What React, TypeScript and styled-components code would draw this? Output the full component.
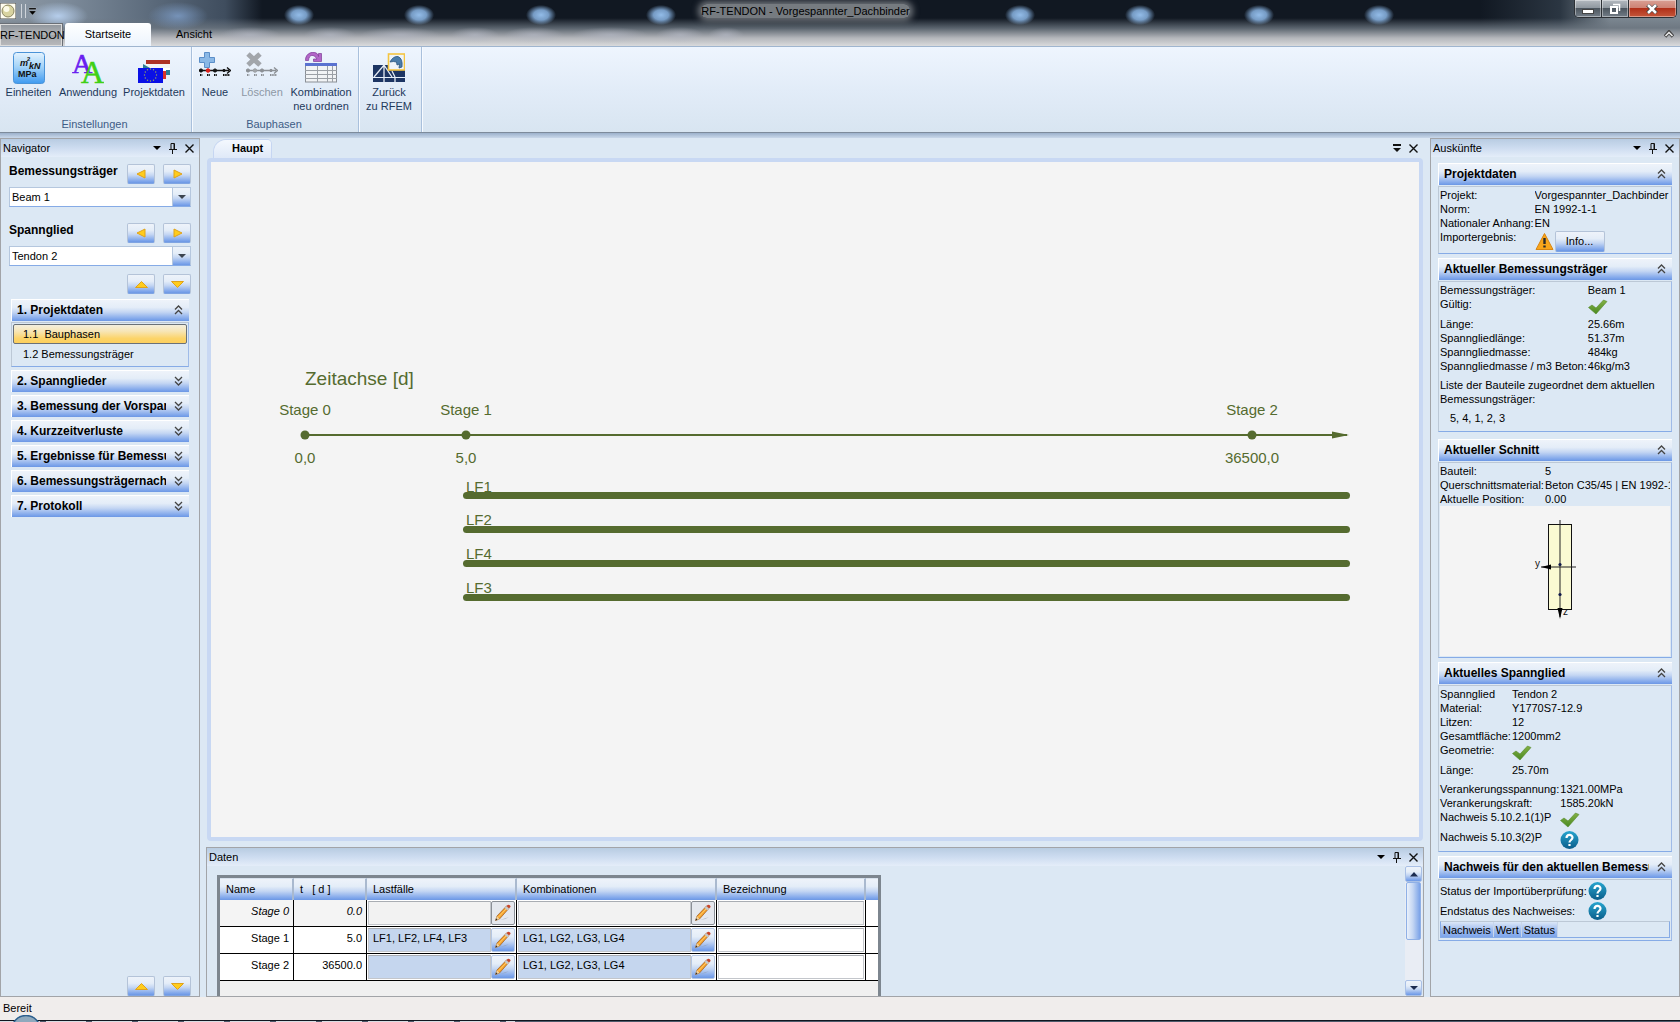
import React from "react";
import styled, { createGlobalStyle, css } from "styled-components";

const GlobalStyle = createGlobalStyle`
  *, *::before, *::after { box-sizing: border-box; }
  html, body, #root { height: 100%; }
  body {
    margin: 0;
    background: #dce8f4;
    color: #000;
    font-family: "Liberation Sans", Arial, sans-serif;
    font-size: 11px;
    line-height: 14px;
  }
  button, select, input { font: inherit; color: inherit; }
  h1, h2, p, dl, dd, ul { margin: 0; padding: 0; }
  ul { list-style: none; }
`;

const glossy = "linear-gradient(#eef3fa 0%, #e4edf8 35%, #c4d6f3 58%, #7ba3ea 92%, #6c97e4 100%)";

/* ---------- frame ---------- */

const Window = styled.div`
  display: flex;
  flex-direction: column;
  height: 100vh;
  overflow: hidden;
`;

const glowSpots = [299, 419, 541, 661, 1020, 1140, 1259, 1379]
  .map((x) => `radial-gradient(ellipse 15px 10px at ${x}px 15px, #93bce8 0%, #86b0dedd 50%, #86b0de00 100%)`)
  .join(",");

const smears = [
  [250, 30],
  [330, 26],
  [400, 40],
  [475, 24],
  [534, 30],
  [610, 38],
  [680, 24],
  [726, 18],
]
  .map(([x, r]) => `radial-gradient(ellipse ${r}px 8px at ${x}px 35px, #b4b8c4aa 0%, #b4b8c400 100%)`)
  .join(",");

const TitleArea = styled.header`
  flex: none;
  height: 46px;
  display: flex;
  flex-direction: column;
  background:
    ${glowSpots},
    ${smears},
    radial-gradient(ellipse 30px 14px at 58px 16px, #b5cdeb 0%, #b5cdeb00 100%),
    radial-gradient(ellipse 30px 14px at 178px 16px, #7f9fcacc 0%, #7f9fca00 100%),
    linear-gradient(#6b757f00 18px, #6b757fcc 28px, #b4b6bb 38px, #d9dadc 46px),
    linear-gradient(90deg, #8d98a3 0, #7f8d9c 60px, #5c6b7c 150px, #3f4d5e 225px, #111822 262px, #111822 1480px, #2b3642 1560px, #7c8791 1610px, #7c8791 100%);
`;

const CaptionBar = styled.div`
  height: 23px;
  display: flex;
  justify-content: space-between;
  align-items: flex-start;
`;

const QuickAccess = styled.div`
  display: flex;
  align-items: center;
  height: 22px;
  gap: 5px;
`;

const Caption = styled.h1`
  margin-top: 4px;
  border-radius: 6px;
  background: #868a8fdd;
  box-shadow: 0 0 6px 3px #868a8fcc;
  font-size: 11px;
  font-weight: normal;
  line-height: 14px;
  white-space: nowrap;
`;

const IconButton = styled.button`
  display: grid;
  place-items: center;
  padding: 0;
  border: 0;
  background: none;
`;

const WindowButtons = styled.div`
  display: flex;
  height: 18px;
  margin-right: 3px;
  border: 1px solid #2c3035;
  border-top: 0;
  border-radius: 0 0 5px 5px;
  overflow: hidden;
`;

const WindowButton = styled(IconButton)<{ $close?: boolean }>`
  width: ${(p) => (p.$close ? 47 : 27)}px;
  border-right: ${(p) => (p.$close ? "0" : "1px solid #2c3035")};
  box-shadow: inset 0 0 0 1px #ffffff66;
  background: ${(p) =>
    p.$close
      ? "linear-gradient(#d9a094 0%, #cd8172 48%, #b13019 50%, #c5573a 100%)"
      : "linear-gradient(#b4bac0 0%, #8e969e 48%, #4d565f 50%, #737d87 100%)"};
`;

const RibbonTabs = styled.nav`
  display: flex;
  align-items: flex-end;
  height: 23px;
  gap: 3px;
`;

const AppMenu = styled.button`
  width: 62px;
  height: 22px;
  padding: 0;
  border: 0;
  background: linear-gradient(#8e949b, #b4b6b9 50%, #a2a5a9 52%, #b9babd);
  box-shadow: inset 0 0 0 1px #dcdcdc, 0 0 0 1px #6a6f76;
  white-space: nowrap;
`;

const RibbonTab = styled.button<{ $active?: boolean }>`
  width: ${(p) => (p.$active ? 86 : 80)}px;
  height: 23px;
  padding: 0 0 1px;
  border: 0;
  border-radius: 3px 3px 0 0;
  background: ${(p) => (p.$active ? "linear-gradient(#fff, #ecf4fd)" : "none")};
`;

const CollapseRibbon = styled(IconButton)`
  margin: 0 6px 8px auto;
`;

/* ---------- ribbon ---------- */

const Ribbon = styled.div`
  flex: none;
  display: flex;
  height: 87px;
  border-top: 1px solid #9fb5cf;
  border-bottom: 1px solid #7d8b9b;
  background: linear-gradient(#eef5fe, #e2ecf8 50%, #d8e5f1);
`;

const RibbonGroup = styled.section`
  display: flex;
  flex-direction: column;
  justify-content: space-between;
  padding: 5px 2px 0 0;
  border-right: 1px solid #a9c0dc;
  box-shadow: 1px 0 0 #f6faff;
  color: #1e395b;
`;

const RibbonItems = styled.div`
  display: flex;
  align-items: flex-start;
`;

const RibbonItem = styled.button<{ $width: number }>`
  width: ${(p) => p.$width}px;
  padding: 0;
  border: 0;
  background: none;
  display: flex;
  flex-direction: column;
  align-items: center;
  line-height: 14px;
  white-space: pre-line;
  color: #1e395b;
  gap: 1px;
  &:disabled { color: #8d98a5; }
`;

const RibbonCaption = styled.p`
  text-align: center;
  line-height: 15px;
  color: #3e5c86;
  min-height: 15px;
`;

const RibbonShade = styled.div`
  flex: none;
  height: 5px;
  background: linear-gradient(#9cb1cb, #c9d8ea);
`;

/* ---------- docked panels ---------- */

const Workspace = styled.main`
  flex: 1;
  min-height: 0;
  display: grid;
  grid-template-columns: 200px minmax(0, 1fr) 250px;
  gap: 6px;
`;

const Dock = styled.section`
  display: flex;
  flex-direction: column;
  min-height: 0;
  border: 1px solid #a2a4a8;
  background: #dce8f4;
`;

const DockHeader = styled.div`
  flex: none;
  display: flex;
  align-items: center;
  height: 18px;
  padding: 0 5px 0 2px;
  gap: 8px;
  background: linear-gradient(#b8cce2, #cddcf0 50%, #e4edf9);
`;

const DockTitle = styled.h2`
  flex: 1;
  font-size: 11px;
  font-weight: normal;
`;

const GlossButton = styled.button`
  display: grid;
  place-items: center;
  width: 28px;
  height: 20px;
  padding: 0;
  border: 1px solid #b4c3d8;
  border-bottom-color: #7fa4e2;
  border-radius: 2px;
  background: ${glossy};
`;

const NavBody = styled.div`
  flex: 1;
  min-height: 0;
  display: flex;
  flex-direction: column;
  padding: 7px 8px 0;
`;

const Picker = styled.div`
  display: grid;
  grid-template-columns: 1fr auto auto;
  column-gap: 8px;
  row-gap: 3px;
  margin-bottom: 16px;
`;

const PickerLabel = styled.label`
  font-size: 12px;
  font-weight: bold;
  line-height: 15px;
`;

const SelectBox = styled.div`
  grid-column: 1 / -1;
  display: grid;
  grid-template-columns: 1fr 18px;
  height: 20px;
  border: 1px solid #b5c7de;
  border-bottom-color: #86abe6;
  background: #fff;
`;

const SelectField = styled.select`
  grid-area: 1 / 1 / 2 / 3;
  width: 100%;
  padding: 0 20px 0 2px;
  border: 0;
  appearance: none;
  background: none;
`;

const SelectArrow = styled.span`
  grid-area: 1 / 2;
  display: grid;
  place-items: center;
  border-left: 1px solid #b5c7de;
  background: ${glossy};
  pointer-events: none;
`;

const ButtonPair = styled.div`
  display: flex;
  justify-content: flex-end;
  gap: 8px;
`;

const PickerSpacing = styled.div`
  margin-top: -8px;
`;

const NavList = styled.div`
  flex: 1;
  display: flex;
  flex-direction: column;
  gap: 3px;
  padding: 5px 2px 0;
`;

const SectionHead = styled.button`
  display: flex;
  align-items: center;
  width: 100%;
  height: 22px;
  padding: 0 6px 2px 5px;
  border: 0;
  border-top: 1px solid #fff;
  border-left: 1px solid #fff;
  background: ${glossy};
  font-size: 12px;
  font-weight: bold;
  text-align: left;
`;

const SectionName = styled.span`
  flex: 1;
  min-width: 0;
  margin-right: 8px;
  overflow: hidden;
  white-space: nowrap;
`;

const boxed = css`
  border: 1px solid #bcc8d6;
  border-bottom-color: #86abe6;
  border-right-color: #9fbbe8;
`;

const NavItems = styled.ul`
  ${boxed}
  margin-top: 1px;
  padding: 1px;
  height: 45px;
`;

const NavItem = styled.button<{ $active?: boolean }>`
  display: block;
  width: 100%;
  height: 20px;
  padding: 0 9px;
  border: 1px solid ${(p) => (p.$active ? "#6a7178" : "transparent")};
  border-radius: 2px;
  background: ${(p) =>
    p.$active ? "linear-gradient(#f3efdf, #f7e5b5 35%, #fcd469 75%, #fccf5e)" : "none"};
  text-align: left;
  white-space: pre;
`;

/* ---------- document and data ---------- */

const Center = styled.div`
  display: flex;
  flex-direction: column;
  min-height: 0;
  min-width: 0;
`;

const DocTabs = styled.div`
  flex: none;
  display: flex;
  align-items: center;
  height: 20px;
  padding: 0 6px 0 8px;
  gap: 8px;
`;

const DocTab = styled.button`
  height: 18px;
  margin: 2px auto 0 0;
  padding: 0 8px 2px 18px;
  border: 0;
  border-radius: 12px 4px 0 0;
  background: linear-gradient(#f4f8fe, #dfe9f8);
  box-shadow: 0 0 0 1px #c6d6f2;
  font-weight: bold;
`;

const DocFrame = styled.div`
  flex: 1;
  min-height: 0;
  display: flex;
  margin: 0 1px 6px;
  border: 4px solid #c8d8f3;
  border-radius: 4px;
  background: #f4f4f4;
`;

const Chart = styled.svg`
  flex: 1;
  min-width: 0;
  height: 100%;
  font-family: "Liberation Sans", Arial, sans-serif;
  font-size: 15px;
  fill: #556b2f;
`;

const DataDock = styled(Dock)`
  flex: none;
  height: 150px;
`;

const DataBody = styled.div`
  flex: 1;
  min-height: 0;
  display: flex;
  justify-content: space-between;
  overflow: hidden;
`;

const TableFrame = styled.div`
  margin: 9px 0 0 10px;
  border: 3px solid #7d868f;
  border-bottom: 0;
  background: #f0f0f0;
`;

const DataTable = styled.table`
  table-layout: fixed;
  width: 656px;
  border-collapse: separate;
  border-spacing: 0;
  background: #fff;
`;

const HeadCell = styled.th<{ $width: number }>`
  width: ${(p) => p.$width}px;
  height: 22px;
  padding: 0 6px 2px;
  border-right: 2px solid #a9b9cf;
  border-top: 1px solid #d8e2ee;
  background: ${glossy};
  font-weight: normal;
  text-align: left;
  white-space: pre;
  &:last-child { border-right: 0; }
`;

const Cell = styled.td<{ $muted?: boolean; $text?: boolean }>`
  height: 27px;
  padding: ${(p) => (p.$text ? "0 4px 4px" : "1px")};
  border-right: 1px solid #000;
  border-bottom: 1px solid #000;
  background: ${(p) => (p.$muted ? "#f4f4f4" : "#fff")};
  font-style: ${(p) => (p.$muted ? "italic" : "normal")};
  text-align: right;
  &:last-child { border-right: 0; background: #fff; }
`;

const CellEditor = styled.div`
  display: flex;
  height: 24px;
`;

const CellInput = styled.input<{ $tone: string }>`
  flex: 1;
  min-width: 0;
  width: 100%;
  height: 24px;
  padding: 0 4px 4px;
  border: 1px solid #c3c6cb;
  border-top-color: #a9adb3;
  background: ${(p) => p.$tone};
`;

const EditButton = styled.button<{ $muted?: boolean }>`
  display: grid;
  place-items: center;
  flex: none;
  width: 24px;
  height: 24px;
  padding: 0;
  border: 1px solid ${(p) => (p.$muted ? "#8a8f96" : "#b4c6e2")};
  border-radius: 2px;
  background: ${(p) => (p.$muted ? "#e5e8ee" : glossy)};
`;

const ScrollTrack = styled.div`
  display: flex;
  flex-direction: column;
  width: 17px;
  margin-right: 1px;
  background: #e9edf4;
`;

const ScrollButton = styled(IconButton)`
  height: 16px;
  border: 1px solid #a9c0e6;
  border-radius: 2px;
  background: ${glossy};
`;

const ScrollThumb = styled.div`
  height: 58px;
  margin: 0 1px auto;
  border: 1px solid #8fb0e6;
  border-radius: 2px;
  background: linear-gradient(90deg, #eaf1fb, #c4d6f3 45%, #7aa2e8);
`;

/* ---------- info panel ---------- */

const InfoBody = styled.div`
  flex: 1;
  min-height: 0;
  padding: 6px 7px 0;
  overflow: hidden;
`;

const InfoSection = styled.section<{ $wideGap?: boolean }>`
  margin-bottom: ${(p) => (p.$wideGap ? 7 : 4)}px;
`;

const InfoBox = styled.div`
  ${boxed}
  margin-top: 1px;
  padding: 1px;
`;

const Facts = styled.dl<{ $label: number; $gap?: boolean }>`
  display: grid;
  grid-template-columns: minmax(${(p) => p.$label}px, max-content) minmax(0, 1fr);
  margin-top: ${(p) => (p.$gap ? 5 : 0)}px;
  white-space: nowrap;
`;

const Term = styled.dt<{ $middle?: boolean }>`
  align-self: ${(p) => (p.$middle ? "center" : "start")};
  padding-right: 1px;
`;

const Value = styled.dd<{ $icon?: boolean }>`
  display: flex;
  align-items: center;
  height: ${(p) => (p.$icon ? 20 : 14)}px;
  overflow: hidden;
`;

const ImportValue = styled.dd`
  display: flex;
  align-items: center;
  gap: 1px;
  height: 22px;
`;

const InfoButton = styled(GlossButton)`
  width: 50px;
  height: 21px;
`;

const Note = styled.p<{ $indent?: boolean }>`
  margin-top: 5px;
  padding: ${(p) => (p.$indent ? "0 0 5px 10px" : "0")};
`;

const SectionDrawing = styled.div`
  height: 150px;
  background: #f4f4f4;
`;

const CheckFrame = styled.div`
  border: 1px solid #86abe6;
  border-top-color: #bcc8d6;
  margin-bottom: 1px;
`;

const CheckTable = styled.table`
  border-collapse: collapse;
`;

const CheckHead = styled.th`
  height: 15px;
  padding: 0 2px;
  border-right: 1px solid #c8d6ea;
  background: linear-gradient(#dbe7f7, #a3bff0 50%, #7ca4ea);
  font-weight: normal;
`;

const StatusBar = styled.footer`
  flex: none;
  height: 23px;
  padding: 0 3px;
  background: #f0edec;
  line-height: 22px;
`;

const TaskbarEdge = styled.div`
  flex: none;
  height: 2px;
  border-top: 1px solid #10161f;
  background:
    linear-gradient(90deg, #4e5a6b00 515px, #4e5a6b 515px),
    repeating-linear-gradient(90deg, #d8dce2 0 40px, #4e5a6b 40px 46px);
`;

const StartOrb = styled.svg`
  position: absolute;
  left: 12px;
  bottom: 0;
`;

/* ---------- small glyphs ---------- */

const ChevronPair = ({ up = false }: { up?: boolean }) => (
  <svg width="9" height="10" viewBox="0 0 9 10" fill="none" stroke="#444" strokeWidth="1.3">
    {up ? <path d="M1 4.5 4.5 1 8 4.5M1 9 4.5 5.5 8 9" /> : <path d="M1 1 4.5 4.5 8 1M1 5.5 4.5 9 8 5.5" />}
  </svg>
);

const arrows = {
  left: "M10 1v8L2 5z",
  right: "M3 1v8l8-4z",
  up: "M.5 8.500 6.500 2.500l6 6z",
  down: "M.5 2.500h12l-6 6z",
};

const GoldArrow = ({ to }: { to: keyof typeof arrows }) => (
  <svg width="13" height="10" viewBox="0 0 13 10">
    <path d={arrows[to]} fill="#ffcc1c" stroke="#e0a21a" strokeWidth="1" strokeLinejoin="round" />
  </svg>
);

const DownGlyph = ({ tone = "#000" }: { tone?: string }) => (
  <svg width="8" height="5" viewBox="0 0 8 5">
    <path d="M0 0h8L4 4z" fill={tone} />
  </svg>
);

const MenuGlyph = () => (
  <svg width="8" height="9" viewBox="0 0 8 9">
    <path d="M0 0h8v2H0zM0 4h8L4 8z" fill="#111" />
  </svg>
);

const PinGlyph = () => (
  <svg width="8" height="11" viewBox="0 0 8 11" fill="none" stroke="#111">
    <path d="M2 6.500V.5h3.500v6M5 1v5M0 6.500h8M3.500 7v4" />
  </svg>
);

const CloseGlyph = () => (
  <svg width="9" height="9" viewBox="0 0 9 9" stroke="#111" strokeWidth="1.400">
    <path d="M.5.5l8 8M8.500.5l-8 8" />
  </svg>
);

const DockControls = () => (
  <>
    <IconButton aria-label="Menü"><DownGlyph /></IconButton>
    <IconButton aria-label="Anheften"><PinGlyph /></IconButton>
    <IconButton aria-label="Schließen"><CloseGlyph /></IconButton>
  </>
);

const CheckMark = () => (
  <svg width="20" height="18" viewBox="0 0 20 18">
    <defs>
      <linearGradient id="tick" x1="0" y1="0" x2="0" y2="1">
        <stop offset="0" stopColor="#84b045" />
        <stop offset="1" stopColor="#4a8a22" />
      </linearGradient>
    </defs>
    <path d="M.5 9.500 4 7l4 3L15.500 2 19 3.500 8 16z" fill="url(#tick)" stroke="#558a2c" strokeWidth=".6" />
  </svg>
);

const QuestionMark = () => (
  <svg width="20" height="20" viewBox="0 0 20 20">
    <defs>
      <linearGradient id="ask" x1="0" y1="0" x2="0" y2="1">
        <stop offset="0" stopColor="#27a5cf" />
        <stop offset="1" stopColor="#0b5d8a" />
      </linearGradient>
    </defs>
    <circle cx="9.500" cy="10" r="9" fill="url(#ask)" />
    <path d="M6.500 8c0-4 6-4 6-.5 0 2.500-3 2.500-3 5M9.500 14v2" fill="none" stroke="#fff" strokeWidth="2.200" />
  </svg>
);

const WarningSign = () => (
  <svg width="19" height="19" viewBox="0 0 19 19">
    <path d="M9.500 1.500 18 17.500H1z" fill="#f9a51a" stroke="#d98510" strokeLinejoin="round" />
    <path d="M9.500 6v6M9.500 13.500v2" stroke="#2a2a2a" strokeWidth="2.400" />
  </svg>
);

const Pencil = () => (
  <svg width="18" height="18" viewBox="0 0 18 18">
    <path d="M6 16q6-2 9-3-4 3-9 3z" fill="#8d97a6" opacity=".6" />
    <path d="M1.500 16.500l1.500-4.500L12.500 2 15 4.300 5.500 15z" fill="#f5a02a" stroke="#9a5a20" strokeWidth=".7" />
    <path d="M4.500 13 13 4" stroke="#ffd070" />
    <path d="M12.200 2 15 4.500l-1.600 1.800L10.700 4z" fill="#c5cad2" />
    <path d="M12.500 2Q14.500 0 16 1.500T15 4.300z" fill="#c8452a" />
    <path d="M1.500 16.500L3 12l2.500 3z" fill="#f0d3a0" />
    <path d="M1.500 16.500l.7-2.200 1.300 1.400z" fill="#333" />
  </svg>
);

/* ---------- ribbon icons ---------- */

const UnitsIcon = () => (
  <svg width="32" height="32" viewBox="0 0 32 32">
    <defs>
      <linearGradient id="units" x1="0" y1="0" x2="0" y2="1">
        <stop offset="0" stopColor="#e4f3fe" />
        <stop offset=".45" stopColor="#a6d4f8" />
        <stop offset="1" stopColor="#3f9af0" />
      </linearGradient>
    </defs>
    <rect x=".5" y=".5" width="31" height="31" rx="3" fill="url(#units)" stroke="#4a93d8" />
    <g fontFamily="Liberation Sans, Arial, sans-serif" fontWeight="bold" fontSize="9" fill="#111">
      <text x="7" y="14" fontStyle="italic">m</text>
      <text x="14" y="9" fontSize="6">2</text>
      <text x="16" y="17" fontStyle="italic">kN</text>
      <text x="5" y="25">MPa</text>
    </g>
  </svg>
);

const FontIcon = () => (
  <svg width="32" height="32" viewBox="0 0 32 32">
    <g fontFamily="Liberation Serif, Times New Roman, serif">
      <text x="0" y="21" fontSize="28" fill="#6a1ff0" stroke="#6a1ff0" strokeWidth=".6">A</text>
      <text x="9" y="31" fontSize="32" fill="#3fd015" stroke="#3fd015" strokeWidth=".6">A</text>
    </g>
  </svg>
);

const euStars = Array.from({ length: 12 }, (_, i) => {
  const a = (i * Math.PI) / 6;
  return { x: 12.5 + 6 * Math.cos(a), y: 23 + 6 * Math.sin(a) };
});

const ProjectIcon = () => (
  <svg width="32" height="32" viewBox="0 0 32 32">
    <path d="M8 8h24v4H8z" fill="#ae3226" />
    <path d="M8 12h24v4H8z" fill="#f4f4f4" />
    <path d="M5 12l7 4H5z" fill="#2a7d95" />
    <path d="M24 16h8v3h-8z" fill="#fff" />
    <path d="M28 18h4v5h-4z" fill="#2a7d95" />
    <path d="M24 19h4v8h-4z" fill="#d8322a" />
    <rect y="16" width="25" height="15" fill="#0a10e6" />
    {euStars.map((s, i) => <circle key={i} cx={s.x} cy={s.y} r=".7" fill="#9aa65c" />)}
  </svg>
);

const AxisMarks = ({ tone, accent }: { tone: string; accent: string }) => (
  <g fill={tone} stroke={tone}>
    <path d="M0 18.500h30M28 15.500l3.500 3-3.500 3" fill="none" strokeWidth="1.300" />
    <circle cx="2" cy="18.500" r="1.600" />
    <circle cx="16" cy="18.500" r="1.600" />
    <circle cx="25" cy="18.500" r="1.200" />
    <circle cx="9" cy="18.500" r="1.800" fill={accent} stroke={accent} />
    <path d="M1 23h2.500M8 23h3M15 23h3M24 23h7" fill="none" strokeWidth="1.800" strokeDasharray="1.500 .7" />
  </g>
);

const NewIcon = () => (
  <svg width="32" height="32" viewBox="0 0 32 32">
    <path d="M5.500.5h5v5h5v5h-5v5h-5v-5h-5v-5h5z" fill="#8ab8e6" stroke="#5b8ec8" />
    <AxisMarks tone="#111" accent="#e0201a" />
  </svg>
);

const DeleteIcon = () => (
  <svg width="32" height="32" viewBox="0 0 32 32">
    <path d="M2 2l12 11M14 2 2 13" stroke="#a2a6ab" strokeWidth="5" />
    <AxisMarks tone="#8c9095" accent="#a0a4a8" />
  </svg>
);

const ReorderIcon = () => (
  <svg width="32" height="32" viewBox="0 0 32 32">
    <rect x=".5" y="12" width="31" height="18" fill="#f1f3f5" stroke="#8a8f96" />
    <rect y="11" width="32" height="3" fill="#5a72d0" />
    <path d="M0 18.500h32M0 22.500h32M0 26.500h32M12.500 14v16M22.500 14v16M27.500 14v16" stroke="#9ba0a6" fill="none" />
    <path d="M.5 8.500C0-1 13-2 13.500 4.500V1.500h3v8h-8V7H12C9 2 4 2 3.500 8.500z" fill="#b266c8" stroke="#7c3c96" strokeWidth=".7" />
  </svg>
);

const BackIcon = () => (
  <svg width="32" height="32" viewBox="0 0 32 32">
    <rect y="13" width="32" height="12" fill="#1d3563" />
    <rect y="26" width="32" height="4" fill="#1d3563" />
    <path d="M1 25 11 13l8 12M11 13v12M11 30v-4M22 30v-4M22 25l-3-6" stroke="#e7edf5" strokeWidth="1.300" fill="none" />
    <rect x="15.500" y="2" width="16" height="16" fill="#eef4fa" stroke="#f4c542" strokeWidth="1.600" />
    <path d="M17 10q3-6 8-5.500 5 2 4 10.500l-3 1 .5-4-2.500 1-.5-3q-3-1-6.500 0z" fill="#4a7caa" stroke="#2b5680" strokeWidth=".8" />
  </svg>
);

/* ---------- content ---------- */

const navSections = [
  "2. Spannglieder",
  "3. Bemessung der Vorspannung",
  "4. Kurzzeitverluste",
  "5. Ergebnisse für Bemessungsträger",
  "6. Bemessungsträgernachweise",
  "7. Protokoll",
];

const stages = [
  { name: "Stage 0", day: "0.0", loads: "", combos: "", muted: true },
  { name: "Stage 1", day: "5.0", loads: "LF1, LF2, LF4, LF3", combos: "LG1, LG2, LG3, LG4", muted: false },
  { name: "Stage 2", day: "36500.0", loads: "", combos: "LG1, LG2, LG3, LG4", muted: false },
];

const columns = [
  { title: "Name", width: 74 },
  { title: "t   [ d ]", width: 73 },
  { title: "Lastfälle", width: 150 },
  { title: "Kombinationen", width: 200 },
  { title: "Bezeichnung", width: 149 },
  { title: "", width: 10 },
];

const timePoints = [
  { x: 94, name: "Stage 0", value: "0,0" },
  { x: 255, name: "Stage 1", value: "5,0" },
  { x: 1041, name: "Stage 2", value: "36500,0" },
];

const loadCases = ["LF1", "LF2", "LF4", "LF3"];

const NavigatorPicker = ({ id, label, value }: { id: string; label: string; value: string }) => (
  <Picker>
    <PickerLabel htmlFor={id}>{label}</PickerLabel>
    <GlossButton aria-label="Zurück"><GoldArrow to="left" /></GlossButton>
    <GlossButton aria-label="Weiter"><GoldArrow to="right" /></GlossButton>
    <SelectBox>
      <SelectField id={id} defaultValue={value}>
        <option>{value}</option>
      </SelectField>
      <SelectArrow><DownGlyph tone="#3c4450" /></SelectArrow>
    </SelectBox>
  </Picker>
);

const UpDown = () => (
  <ButtonPair>
    <GlossButton aria-label="Nach oben"><GoldArrow to="up" /></GlossButton>
    <GlossButton aria-label="Nach unten"><GoldArrow to="down" /></GlossButton>
  </ButtonPair>
);

const Navigator = () => (
  <Dock>
    <DockHeader>
      <DockTitle>Navigator</DockTitle>
      <DockControls />
    </DockHeader>
    <NavBody>
      <NavigatorPicker id="beam" label="Bemessungsträger" value="Beam 1" />
      <NavigatorPicker id="tendon" label="Spannglied" value="Tendon 2" />
      <PickerSpacing>
        <UpDown />
      </PickerSpacing>
      <NavList>
        <div>
          <SectionHead>
            <SectionName>1. Projektdaten</SectionName>
            <ChevronPair up />
          </SectionHead>
          <NavItems>
            <li><NavItem $active>{"1.1  Bauphasen"}</NavItem></li>
            <li><NavItem>1.2 Bemessungsträger</NavItem></li>
          </NavItems>
        </div>
        {navSections.map((name) => (
          <SectionHead key={name}>
            <SectionName>{name}</SectionName>
            <ChevronPair />
          </SectionHead>
        ))}
      </NavList>
      <UpDown />
    </NavBody>
  </Dock>
);

const Timeline = () => (
  <Chart viewBox="0 -1 1208 675" role="img" aria-label="Zeitachse">
    <text x="94" y="222" fontSize="19">Zeitachse [d]</text>
    <rect x="94" y="271" width="1042" height="2" />
    <path d="M1121 268.500 1138 272l-17 3.500z" />
    {timePoints.map((p) => (
      <g key={p.name} textAnchor="middle">
        <text x={p.x} y="252">{p.name}</text>
        <circle cx={p.x} cy="272" r="4.500" />
        <text x={p.x} y="300">{p.value}</text>
      </g>
    ))}
    {loadCases.map((name, i) => (
      <g key={name}>
        <text x="255" y={329 + i * 34 - (i > 0 ? 1 : 0)}>{name}</text>
        <rect x="252" y={329 + i * 34} width="887" height="7" rx="3.500" />
      </g>
    ))}
  </Chart>
);

const StageTable = () => (
  <DataTable>
    <thead>
      <tr>
        {columns.map((c) => <HeadCell key={c.title} $width={c.width}>{c.title}</HeadCell>)}
      </tr>
    </thead>
    <tbody>
      {stages.map((s) => {
        const tone = s.muted ? "#f2f2f2" : "#c5d6ee";
        return (
          <tr key={s.name}>
            <Cell $muted={s.muted} $text>{s.name}</Cell>
            <Cell $muted={s.muted} $text>{s.day}</Cell>
            {[s.loads, s.combos].map((text, i) => (
              <Cell key={i}>
                <CellEditor>
                  <CellInput $tone={tone} defaultValue={text} aria-label={`${columns[i + 2].title} ${s.name}`} />
                  <EditButton $muted={s.muted} aria-label="Bearbeiten"><Pencil /></EditButton>
                </CellEditor>
              </Cell>
            ))}
            <Cell>
              <CellEditor>
                <CellInput $tone={s.muted ? "#f2f2f2" : "#fff"} aria-label={`Bezeichnung ${s.name}`} />
              </CellEditor>
            </Cell>
            <Cell />
          </tr>
        );
      })}
    </tbody>
  </DataTable>
);

type Fact = [string, string];

const FactRows = ({ rows }: { rows: Fact[] }) => (
  <>
    {rows.map(([label, value]) => (
      <React.Fragment key={label}>
        <Term>{label}</Term>
        {value === "ok" ? (
          <Value $icon><CheckMark /></Value>
        ) : value === "open" ? (
          <Value $icon><QuestionMark /></Value>
        ) : (
          <Value>{value}</Value>
        )}
      </React.Fragment>
    ))}
  </>
);

const InfoPart = ({ title, wideGap, children }: { title: string; wideGap?: boolean; children: React.ReactNode }) => (
  <InfoSection $wideGap={wideGap}>
    <SectionHead>
      <SectionName>{title}</SectionName>
      <ChevronPair up />
    </SectionHead>
    <InfoBox>{children}</InfoBox>
  </InfoSection>
);

const CrossSection = () => (
  <svg width="100%" height="150" viewBox="0 0 230 150" role="img" aria-label="Querschnitt">
    <rect x="108.500" y="18.500" width="23" height="85" fill="#fafad2" stroke="#111" />
    <path d="M120 14v97M101 61h35" stroke="#222" />
    <path d="M101 61l10-2.500v5zM120 113l-2.500-11h5z" fill="#000" />
    <circle cx="120" cy="58.500" r="1.600" fill="#10184a" />
    <circle cx="120" cy="88.500" r="1.600" fill="#10184a" />
    <g fontSize="10" fill="#111">
      <text x="95" y="61">y</text>
      <text x="123" y="109">z</text>
    </g>
  </svg>
);

const InfoPanel = () => (
  <Dock>
    <DockHeader>
      <DockTitle>Auskünfte</DockTitle>
      <DockControls />
    </DockHeader>
    <InfoBody>
      <InfoPart title="Projektdaten">
        <Facts $label={92}>
          <FactRows rows={[["Projekt:", "Vorgespannter_Dachbinder"], ["Norm:", "EN 1992-1-1"], ["Nationaler Anhang:", "EN"]]} />
          <Term>Importergebnis:</Term>
          <ImportValue>
            <WarningSign />
            <InfoButton>Info...</InfoButton>
          </ImportValue>
        </Facts>
      </InfoPart>
      <InfoPart title="Aktueller Bemessungsträger" wideGap>
        <Facts $label={142}>
          <FactRows
            rows={[
              ["Bemessungsträger:", "Beam 1"],
              ["Gültig:", "ok"],
              ["Länge:", "25.66m"],
              ["Spanngliedlänge:", "51.37m"],
              ["Spanngliedmasse:", "484kg"],
              ["Spanngliedmasse / m3 Beton:", "46kg/m3"],
            ]}
          />
        </Facts>
        <Note>Liste der Bauteile zugeordnet dem aktuellen Bemessungsträger:</Note>
        <Note $indent>5, 4, 1, 2, 3</Note>
      </InfoPart>
      <InfoPart title="Aktueller Schnitt">
        <Facts $label={102}>
          <FactRows
            rows={[
              ["Bauteil:", "5"],
              ["Querschnittsmaterial:", "Beton C35/45 | EN 1992-1-1"],
              ["Aktuelle Position:", "0.00"],
            ]}
          />
        </Facts>
        <SectionDrawing><CrossSection /></SectionDrawing>
      </InfoPart>
      <InfoPart title="Aktuelles Spannglied">
        <Facts $label={71}>
          <FactRows
            rows={[
              ["Spannglied", "Tendon 2"],
              ["Material:", "Y1770S7-12.9"],
              ["Litzen:", "12"],
              ["Gesamtfläche:", "1200mm2"],
              ["Geometrie:", "ok"],
              ["Länge:", "25.70m"],
            ]}
          />
        </Facts>
        <Facts $label={120} $gap>
          <FactRows
            rows={[
              ["Verankerungsspannung:", "1321.00MPa"],
              ["Verankerungskraft:", "1585.20kN"],
              ["Nachweis 5.10.2.1(1)P", "ok"],
              ["Nachweis 5.10.3(2)P", "open"],
            ]}
          />
        </Facts>
      </InfoPart>
      <InfoPart title="Nachweis für den aktuellen Bemessungsträger">
        <Facts $label={147}>
          <Term $middle>Status der Importüberprüfung:</Term>
          <Value $icon><QuestionMark /></Value>
          <Term $middle>Endstatus des Nachweises:</Term>
          <Value $icon><QuestionMark /></Value>
        </Facts>
        <CheckFrame>
          <CheckTable>
            <thead>
              <tr>
                <CheckHead>Nachweis</CheckHead>
                <CheckHead>Wert</CheckHead>
                <CheckHead>Status</CheckHead>
              </tr>
            </thead>
          </CheckTable>
        </CheckFrame>
      </InfoPart>
    </InfoBody>
  </Dock>
);

export default function App() {
  return (
    <Window>
      <GlobalStyle />
      <TitleArea>
        <CaptionBar>
          <QuickAccess>
            <svg width="16" height="16" viewBox="0 0 16 16">
              <rect width="16" height="16" fill="#fffdf0" stroke="#444" />
              <circle cx="8" cy="8" r="6" fill="#d8d3a0" stroke="#8a8560" />
              <circle cx="6.500" cy="6" r="3" fill="#fbfae8" />
            </svg>
            <svg width="16" height="14" viewBox="0 0 16 14">
              <path d="M.5 0v14M4.500 0v14" stroke="#cfd4da" />
              <path d="M8 4h7v1.500H8zM8 7h7l-3.500 4z" fill="#000" stroke="#ffffff55" strokeWidth=".5" />
            </svg>
          </QuickAccess>
          <Caption>RF-TENDON - Vorgespannter_Dachbinder</Caption>
          <WindowButtons>
            <WindowButton aria-label="Minimieren">
              <svg width="12" height="12" viewBox="0 0 12 12"><rect x=".5" y="6.500" width="11" height="4" fill="#fff" stroke="#444" /></svg>
            </WindowButton>
            <WindowButton aria-label="Wiederherstellen">
              <svg width="12" height="12" viewBox="0 0 12 12" fill="none">
                <path d="M4 1.500h6.500V8" stroke="#fff" strokeWidth="1.500" />
                <rect x="2" y="4" width="6" height="6" stroke="#fff" strokeWidth="2" />
              </svg>
            </WindowButton>
            <WindowButton $close aria-label="Beenden">
              <svg width="12" height="10" viewBox="0 0 12 10">
                <path d="M1.500 1l9 8M10.500 1l-9 8" stroke="#444" strokeWidth="4" />
                <path d="M2 1l8 8M10 1 2 9" stroke="#fff" strokeWidth="2.500" />
              </svg>
            </WindowButton>
          </WindowButtons>
        </CaptionBar>
        <RibbonTabs>
          <AppMenu>RF-TENDON</AppMenu>
          <RibbonTab $active>Startseite</RibbonTab>
          <RibbonTab>Ansicht</RibbonTab>
          <CollapseRibbon aria-label="Menüband minimieren">
            <svg width="10" height="8" viewBox="0 0 10 8">
              <path d="M1 6.500 5 2l4 4.500" fill="none" stroke="#444" strokeWidth="3.500" />
              <path d="M1.500 6 5 2.500 8.500 6" fill="none" stroke="#eee" strokeWidth="1.500" />
            </svg>
          </CollapseRibbon>
        </RibbonTabs>
      </TitleArea>

      <Ribbon>
        <RibbonGroup>
          <RibbonItems>
            <RibbonItem $width={57}><UnitsIcon />Einheiten</RibbonItem>
            <RibbonItem $width={62}><FontIcon />Anwendung</RibbonItem>
            <RibbonItem $width={70}><ProjectIcon />Projektdaten</RibbonItem>
          </RibbonItems>
          <RibbonCaption>Einstellungen</RibbonCaption>
        </RibbonGroup>
        <RibbonGroup>
          <RibbonItems>
            <RibbonItem $width={46}><NewIcon />Neue</RibbonItem>
            <RibbonItem $width={48} disabled><DeleteIcon />Löschen</RibbonItem>
            <RibbonItem $width={70}><ReorderIcon />{"Kombination\nneu ordnen"}</RibbonItem>
          </RibbonItems>
          <RibbonCaption>Bauphasen</RibbonCaption>
        </RibbonGroup>
        <RibbonGroup>
          <RibbonItems>
            <RibbonItem $width={60}><BackIcon />{"Zurück\nzu RFEM"}</RibbonItem>
          </RibbonItems>
        </RibbonGroup>
      </Ribbon>
      <RibbonShade />

      <Workspace>
        <Navigator />
        <Center>
          <DocTabs>
            <DocTab>Haupt</DocTab>
            <IconButton aria-label="Fensterliste"><MenuGlyph /></IconButton>
            <IconButton aria-label="Schließen"><CloseGlyph /></IconButton>
          </DocTabs>
          <DocFrame>
            <Timeline />
          </DocFrame>
          <DataDock>
            <DockHeader>
              <DockTitle>Daten</DockTitle>
              <DockControls />
            </DockHeader>
            <DataBody>
              <TableFrame>
                <StageTable />
              </TableFrame>
              <ScrollTrack>
                <ScrollButton aria-label="Nach oben blättern">
                  <svg width="8" height="5" viewBox="0 0 8 5"><path d="M0 4.500 4 0l4 4.500z" fill="#1c2c50" /></svg>
                </ScrollButton>
                <ScrollThumb />
                <ScrollButton aria-label="Nach unten blättern"><DownGlyph tone="#1c2c50" /></ScrollButton>
              </ScrollTrack>
            </DataBody>
          </DataDock>
        </Center>
        <InfoPanel />
      </Workspace>

      <StatusBar>Bereit</StatusBar>
      <TaskbarEdge />
      <StartOrb width="28" height="7" viewBox="0 0 28 7">
        <ellipse cx="14" cy="14" rx="14" ry="13.500" fill="#8fa9bd" stroke="#2b5f8e" strokeWidth="1.500" />
      </StartOrb>
    </Window>
  );
}
